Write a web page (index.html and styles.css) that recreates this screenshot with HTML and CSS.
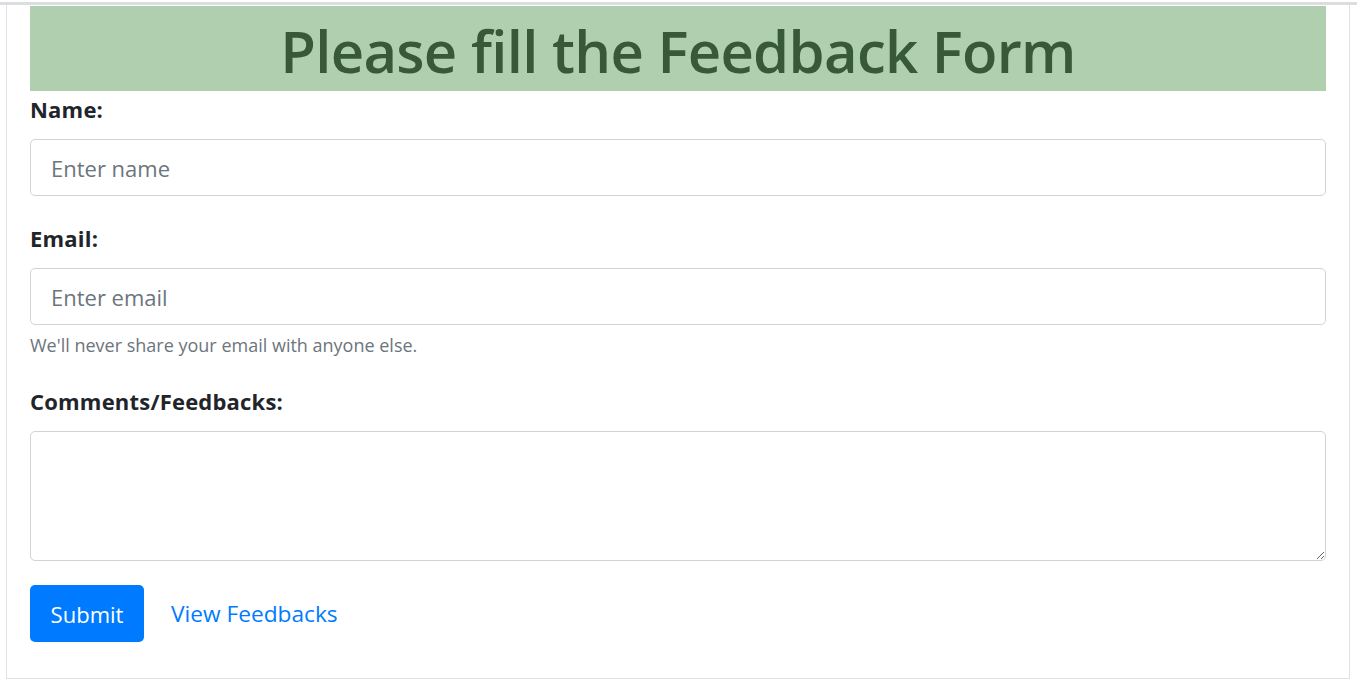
FILE: index.html
```html
<!DOCTYPE html>
<html lang="en">
<head>
<meta charset="utf-8">
<title>Feedback Form</title>
<link rel="stylesheet" href="styles.css">
</head>
<body>
<div class="topbar"></div>
<div class="container">
  <h1 class="banner">Please fill the Feedback Form</h1>
  <form class="form">
    <div class="group">
      <label class="label" for="name">Name:</label>
      <input class="control" id="name" type="text" placeholder="Enter name">
    </div>
    <div class="group">
      <label class="label" for="email">Email:</label>
      <input class="control" id="email" type="email" placeholder="Enter email">
      <small class="help">We'll never share your email with anyone else.</small>
    </div>
    <div class="group group-last">
      <label class="label" for="comments">Comments/Feedbacks:</label>
      <textarea class="control area" id="comments"></textarea>
    </div>
    <div class="actions">
      <button class="btn" type="button">Submit</button>
      <a class="link" href="#">View Feedbacks</a>
    </div>
  </form>
</div>
</body>
</html>
```
FILE: styles.css
```css
* { box-sizing: border-box; }
html, body { margin: 0; padding: 0; background: #fff; }
body {
  font-family: "Open Sans", "Noto Sans", sans-serif;
  color: #212529;
}
.topbar {
  margin-top: 2px;
  height: 3px;
  background: #dcdde0;
}
.container {
  margin: 0 7px 0 6px;
  border: 1px solid #dee2e6;
  border-top: none;
  padding: 1px 23px 36px;
}
.banner {
  margin: 0;
  height: 85px;
  padding-top: 4px;
  line-height: 81px;
  background: #b0cfaf;
  color: #375937;
  text-align: center;
  font-size: 58px;
  font-weight: 600;
  letter-spacing: -0.7px;
}
.form { padding-top: 5px; }
.group { margin-bottom: 29px; }
.group-last { margin-bottom: 24px; }
.label {
  display: block;
  font-size: 22px;
  line-height: 27px;
  font-weight: 700;
  letter-spacing: 0.2px;
  margin-bottom: 16px;
}
.control {
  display: block;
  width: 100%;
  height: 57px;
  padding: 0 20px;
  font-family: inherit;
  font-size: 22px;
  color: #495057;
  border: 1px solid #ced4da;
  border-radius: 5px;
  background: #fff;
  outline: none;
}
.control::placeholder { color: #6c757d; opacity: 1; }
.area {
  height: 130px;
  padding: 10px 20px;
  resize: vertical;
}
.help {
  display: block;
  margin-top: 7px;
  margin-bottom: 2px;
  font-size: 18px;
  line-height: 27px;
  color: #6c757d;
}
.actions {
  display: flex;
  align-items: center;
}
.btn {
  height: 57px;
  width: 114px;
  padding: 0;
  border: none;
  border-radius: 5px;
  background: #007bff;
  color: #fff;
  font-family: inherit;
  font-size: 22px;
}
.link {
  margin-left: 27px;
  color: #007bff;
  text-decoration: none;
  font-size: 22.7px;
}
```
